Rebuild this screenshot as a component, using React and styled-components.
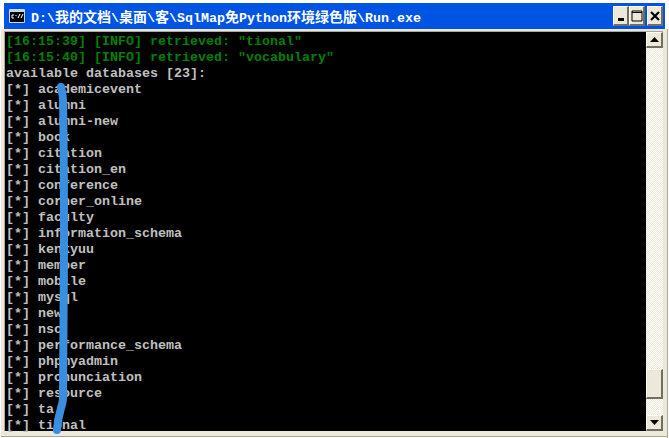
import React from 'react';
import styled, { createGlobalStyle } from 'styled-components';

const GlobalStyle = createGlobalStyle`
  html, body {
    margin: 0;
    padding: 0;
    background: #fff;
    overflow: hidden;
  }
`;

const Win = styled.div`
  position: relative;
  width: 669px;
  height: 438px;
  box-sizing: border-box;
  padding: 3px 0 0 0;
  background: #fff;
  display: flex;
  flex-direction: column;
`;

const TitleBar = styled.div`
  height: 26px;
  flex: none;
  background: #0054e3;
  display: flex;
  align-items: center;
  padding: 0 2px 0 5px;
  margin: 0 4px;
`;

const Title = styled.div`
  flex: 1;
  margin-left: 6px;
  color: #fff;
  font: bold 13.33px "Liberation Mono", monospace;
  white-space: nowrap;
`;

const Han = styled.span`
  font: bold 14px "Noto Sans CJK SC", sans-serif;
`;

const CapButton = styled.div`
  width: 16px;
  height: 20px;
  margin-left: ${(p) => p.gap}px;
  box-sizing: border-box;
  background: #ece9d8;
  border-style: solid;
  border-width: 1px 2px 2px 1px;
  border-color: #fffff8 #716f64 #716f64 #fffff8;
  display: flex;
  align-items: center;
  justify-content: center;
`;

const Frame = styled.div`
  flex: 1;
  display: flex;
  min-height: 0;
  padding: 0 6px 7px 4px;
  background: #ece9d8;
  box-shadow: inset 1px 0 0 #fff, inset -1px 0 0 #fff, inset -2px 0 0 #aca899,
    inset 0 -1px 0 #fff, inset 0 -2px 0 #aca899;
`;

const Inner = styled.div`
  flex: 1;
  display: flex;
  min-width: 0;
  margin-top: 2px;
  border-top: 1px solid #aca899;
  border-left: 1px solid #aca899;
`;

const Screen = styled.div`
  flex: 1;
  background: #000;
  padding: 2px 0 0 1px;
  font: 13.33px/16px "Liberation Mono", monospace;
  white-space: pre;
`;

const Line = styled.div`
  height: 16px;
  color: ${(p) => p.color || '#c0c0c0'};
  font-weight: bold;
`;

const Scroll = styled.div`
  width: 17px;
  flex: none;
  display: flex;
  flex-direction: column;
  background-color: #f5f4ea;
  background-image: conic-gradient(#ece9d8 25%, #fff 0 50%, #ece9d8 0 75%, #fff 0);
  background-size: 2px 2px;
`;

const ScrollBtn = styled.div`
  height: ${(p) => p.h}px;
  flex: none;
  box-sizing: border-box;
  background: #ece9d8;
  border-style: solid;
  border-width: 1px 2px 2px 1px;
  border-color: #fffff8 #716f64 #716f64 #fffff8;
  display: flex;
  align-items: center;
  justify-content: center;
`;

const Track = styled.div`
  height: ${(p) => p.h}px;
  flex: none;
`;

const Stroke = styled.svg`
  position: absolute;
  left: 0;
  top: 0;
  pointer-events: none;
`;

const lines = [
  ['[16:15:39] [INFO] retrieved: "tional"', '#008000'],
  ['[16:15:40] [INFO] retrieved: "vocabulary"', '#008000'],
  ['available databases [23]:'],
  ['[*] academicevent'],
  ['[*] alumni'],
  ['[*] alumni-new'],
  ['[*] book'],
  ['[*] citation'],
  ['[*] citation_en'],
  ['[*] conference'],
  ['[*] corner_online'],
  ['[*] faculty'],
  ['[*] information_schema'],
  ['[*] kenkyuu'],
  ['[*] member'],
  ['[*] mobile'],
  ['[*] mysql'],
  ['[*] new'],
  ['[*] nsc'],
  ['[*] performance_schema'],
  ['[*] phpmyadmin'],
  ['[*] pronunciation'],
  ['[*] resource'],
  ['[*] ta'],
  ['[*] tional'],
];

export default function App() {
  return (
    <>
      <GlobalStyle />
      <Win>
        <TitleBar>
          <svg width="16" height="14" viewBox="0 0 16 14">
            <rect width="16" height="14" rx="1" fill="#c9d6e8" />
            <rect x="1" y="3" width="14" height="10" fill="#000" />
            <path d="M3 6h2M3 6v3M3 9h2M7 6v1M7 9v0M9 9l2-4M12 9l2-4" stroke="#fff" fill="none" />
          </svg>
          <Title>D:\<Han>我的文档</Han>\<Han>桌面</Han>\<Han>客</Han>\SqlMap<Han>免</Han>Python<Han>环境绿色版</Han>\Run.exe</Title>
          <CapButton gap={0}>
            <svg width="8" height="10" viewBox="0 0 8 10"><rect x="1" y="7" width="6" height="3" fill="#000" /></svg>
          </CapButton>
          <CapButton gap={0}>
            <svg width="12" height="12" viewBox="0 0 12 12"><path d="M1 1h10v10H1zM1 2.5h10" fill="none" stroke="#000" /></svg>
          </CapButton>
          <CapButton gap={2}>
            <svg width="10" height="10" viewBox="0 0 10 10"><path d="M1 1l8 8M9 1l-8 8" stroke="#000" strokeWidth="2.2" /></svg>
          </CapButton>
        </TitleBar>
        <Frame>
          <Inner>
            <Screen>
              {lines.map(([text, color]) => (
                <Line key={text} color={color}>{text}</Line>
              ))}
            </Screen>
            <Scroll>
              <ScrollBtn h={16}>
                <svg width="9" height="5" viewBox="0 0 9 5"><path d="M4.5 0L9 5H0z" fill="#000" /></svg>
              </ScrollBtn>
              <Track h={321} />
              <ScrollBtn h={30} />
              <Track h={16} />
              <ScrollBtn h={16}>
                <svg width="9" height="5" viewBox="0 0 9 5"><path d="M0 0h9L4.5 5z" fill="#000" /></svg>
              </ScrollBtn>
            </Scroll>
          </Inner>
        </Frame>
        <Stroke width="669" height="438" viewBox="0 0 669 438">
          <path
            d="M61 87C62 92 63 95 63 100C64 150 64 200 64 250C64 300 63 350 63 398C63 406 58 412 57 430"
            fill="none"
            stroke="#3a8ee0"
            strokeWidth="8"
            strokeLinecap="round"
          />
        </Stroke>
      </Win>
    </>
  );
}
